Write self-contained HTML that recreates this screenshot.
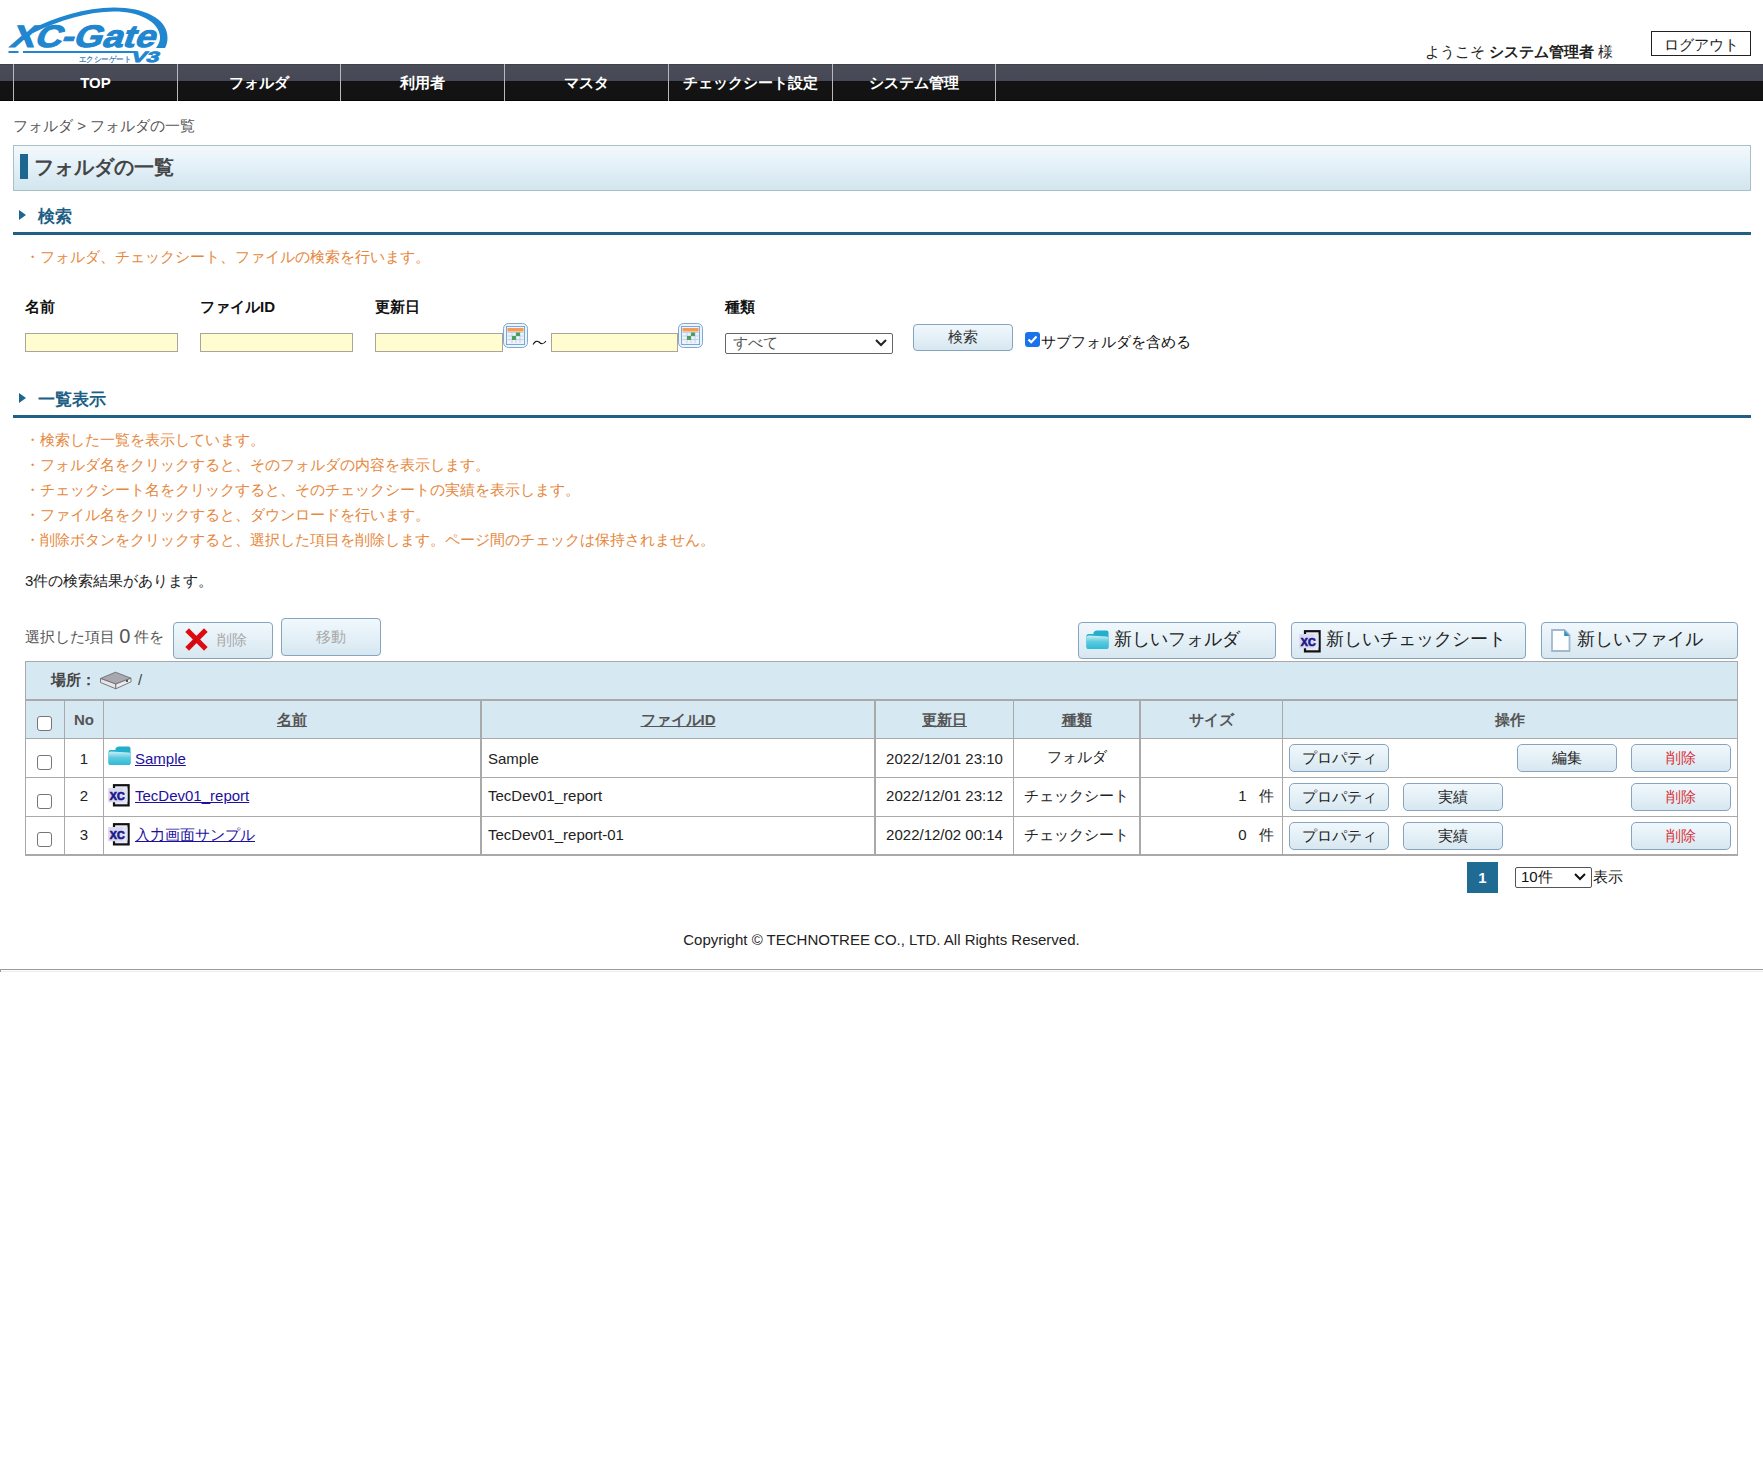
<!DOCTYPE html>
<html><head><meta charset="utf-8">
<style>
*{margin:0;padding:0;box-sizing:border-box}
html,body{width:1763px;height:1465px;background:#fff;overflow:hidden}
body{font-family:"Liberation Sans",sans-serif;font-size:15px;color:#222;position:relative}
.a{position:absolute;white-space:nowrap}
.nav{position:absolute;left:0;top:64px;width:1763px;height:37px;background:linear-gradient(#3e404a 0,#3e404a 1px,#4a4c58 1px,#464855 17px,#0e0f12 17px,#131313 18px,#131313 36px,#050505 36px)}
.nav .sep{position:absolute;top:0;width:1px;height:37px;background:#b8b8c0}
.nav .it{position:absolute;top:0;height:37px;line-height:37px;color:#fff;font-weight:bold;font-size:15px;text-align:center}
.crumb{color:#555;font-size:15px}
.titlebox{position:absolute;left:13px;top:145px;width:1738px;height:46px;border:1px solid #a9c0c8;background:linear-gradient(#f4f8fa,#e6f3fa 35%,#dcebf3 70%,#d2e6ee)}
.titlebar{position:absolute;left:20px;top:154px;width:8px;height:25px;background:#1d6690}
.title{left:34px;top:154px;font-size:20px;font-weight:bold;color:#454545;line-height:26px}
.sech{font-size:17px;font-weight:bold;color:#1d5f86}
.tri{position:absolute;width:0;height:0;border-top:5px solid transparent;border-bottom:5px solid transparent;border-left:7px solid #1d6690}
.uline{position:absolute;left:13px;width:1738px;height:3px;background:#215f84}
.note{color:#e6873c;font-size:15px}
.lbl{font-weight:bold;font-size:15px;color:#111}
.inp{position:absolute;height:19px;background:#fffdd0;border:1px solid #aaa59a}
.cal{position:absolute;width:24px;height:24px;border:1px solid #7aa6cf;border-radius:4px;background:linear-gradient(#eef5fc,#c9dcef)}
.btn{position:absolute;border:1px solid #86a3bf;border-radius:4px;background:linear-gradient(#f0f8fc,#e4f0f7 50%,#d7e7f0);text-align:center;color:#333}
.tbl{position:absolute;border-collapse:collapse}

.cb{position:absolute;width:15px;height:15px;border:1px solid #767676;border-radius:3px;background:#fff}
.th{top:701px;height:37px;line-height:37px;text-align:center;font-weight:bold;font-size:15px;color:#555}
.th u{text-decoration:underline}
.td{font-size:15px;color:#222;line-height:20px}
.lnk{color:#1d10a0;text-decoration:underline}
.sb{width:100px;height:28px;line-height:26px;font-size:15px;border-radius:5px;color:#222}
.red{color:#d92e36}
</style></head><body>

<!-- logo -->
<svg class="a" style="left:0;top:0" width="180" height="66" viewBox="0 0 180 66">
  <path d="M30 30 C 55 17, 85 7.5, 114 7.5 C 145 7.5, 168 19, 167.5 38 C 167.5 42, 166.5 45.5, 165 48 L 156 48 C 159 44, 160.5 40, 160 36 C 158.5 22, 140 11.5, 114 11.5 C 88 11.5, 60 20, 33 33 Z" fill="#2086cf"/>
  <g transform="translate(17.3,0) skewX(-20)">
  <text x="9" y="47.5" font-family="Liberation Sans" font-weight="bold" font-size="31" fill="#2086cf" stroke="#2086cf" stroke-width="1" textLength="145" lengthAdjust="spacingAndGlyphs">XC-Gate</text>
  </g>
  <rect x="8.5" y="51" width="10" height="2" fill="#2086cf"/>
  <rect x="23" y="51" width="113" height="2" fill="#2086cf"/>
  <g transform="translate(22.6,0) skewX(-20)">
  <text x="130" y="62.3" font-family="Liberation Sans" font-weight="bold" font-size="15" fill="#2086cf" stroke="#2086cf" stroke-width="0.8" textLength="28" lengthAdjust="spacingAndGlyphs">V3</text>
  </g>
  <text x="79" y="62" font-family="Liberation Sans" font-size="7.5" fill="#2f78b0" stroke="#2f78b0" stroke-width="0.2" textLength="52" lengthAdjust="spacingAndGlyphs">エクシーゲート</text>
</svg>

<div class="a" style="left:1425px;top:43px;font-size:15px;color:#222">ようこそ <b>システム管理者</b> 様</div>
<div class="a" style="left:1651px;top:31px;width:100px;height:25px;border:1px solid #222;text-align:center;line-height:25px;font-size:15px;color:#222">ログアウト</div>

<div class="nav">
  <div class="sep" style="left:13px"></div>
  <div class="it" style="left:14px;width:163px">TOP</div>
  <div class="sep" style="left:177px"></div>
  <div class="it" style="left:178px;width:162px">フォルダ</div>
  <div class="sep" style="left:340px"></div>
  <div class="it" style="left:341px;width:163px">利用者</div>
  <div class="sep" style="left:504px"></div>
  <div class="it" style="left:505px;width:163px">マスタ</div>
  <div class="sep" style="left:668px"></div>
  <div class="it" style="left:669px;width:163px">チェックシート設定</div>
  <div class="sep" style="left:832px"></div>
  <div class="it" style="left:833px;width:162px">システム管理</div>
  <div class="sep" style="left:995px"></div>
</div>

<div class="a crumb" style="left:13px;top:117px">フォルダ &gt; フォルダの一覧</div>

<div class="titlebox"></div>
<div class="titlebar"></div>
<div class="a title">フォルダの一覧</div>

<!-- search section -->
<div class="tri" style="left:19px;top:210px"></div>
<div class="a sech" style="left:38px;top:205px">検索</div>
<div class="uline" style="top:232px"></div>
<div class="a note" style="left:25px;top:248px">・フォルダ、チェックシート、ファイルの検索を行います。</div>


<!-- search form -->
<div class="a lbl" style="left:25px;top:298px">名前</div>
<div class="a lbl" style="left:200px;top:298px">ファイルID</div>
<div class="a lbl" style="left:375px;top:298px">更新日</div>
<div class="a lbl" style="left:725px;top:298px">種類</div>
<div class="inp" style="left:25px;top:333px;width:153px"></div>
<div class="inp" style="left:200px;top:333px;width:153px"></div>
<div class="inp" style="left:375px;top:333px;width:128px"></div>
<svg class="a" style="left:503px;top:323px" width="25" height="25" viewBox="0 0 25 25">
 <rect x="0.5" y="0.5" width="24" height="24" rx="5" fill="#eaf6fd" stroke="#7ea6cf"/>
 <rect x="3" y="3" width="19" height="19" fill="#86a4d0"/>
 <rect x="4" y="4" width="17" height="17" fill="#eef3fb"/>
 <rect x="4.5" y="5" width="16" height="3.5" fill="#f49b55"/>
 <g fill="#bcd3ea"><rect x="4.5" y="9" width="16" height="1"/><rect x="4.5" y="12.5" width="16" height="1"/><rect x="4.5" y="16" width="16" height="1"/><rect x="8.5" y="9" width="1" height="11"/><rect x="12.5" y="9" width="1" height="11"/><rect x="16.5" y="9" width="1" height="11"/></g>
 <rect x="13" y="9.5" width="4" height="3.5" fill="#4f9e5a"/>
 <rect x="9" y="13" width="4" height="4" fill="#4f9e5a"/>
</svg>
<svg class="a" style="left:532px;top:339px" width="15" height="7" viewBox="0 0 15 7"><path d="M1 5.5 C 3 2, 5 1.5, 7 3 C 9 5, 11 6, 14 2" fill="none" stroke="#111" stroke-width="1.1"/></svg>
<div class="inp" style="left:551px;top:333px;width:127px"></div>
<svg class="a" style="left:678px;top:323px" width="25" height="25" viewBox="0 0 25 25">
 <rect x="0.5" y="0.5" width="24" height="24" rx="5" fill="#eaf6fd" stroke="#7ea6cf"/>
 <rect x="3" y="3" width="19" height="19" fill="#86a4d0"/>
 <rect x="4" y="4" width="17" height="17" fill="#eef3fb"/>
 <rect x="4.5" y="5" width="16" height="3.5" fill="#f49b55"/>
 <g fill="#bcd3ea"><rect x="4.5" y="9" width="16" height="1"/><rect x="4.5" y="12.5" width="16" height="1"/><rect x="4.5" y="16" width="16" height="1"/><rect x="8.5" y="9" width="1" height="11"/><rect x="12.5" y="9" width="1" height="11"/><rect x="16.5" y="9" width="1" height="11"/></g>
 <rect x="13" y="9.5" width="4" height="3.5" fill="#4f9e5a"/>
 <rect x="9" y="13" width="4" height="4" fill="#4f9e5a"/>
</svg>
<div class="a" style="left:725px;top:333px;width:168px;height:21px;border:1px solid #666;border-radius:2px;background:#fff"></div>
<div class="a" style="left:733px;top:334px;font-size:15px;color:#555;line-height:18px">すべて</div>
<svg class="a" style="left:874px;top:338px" width="14" height="10" viewBox="0 0 14 10"><path d="M2 2 L7 7 L12 2" fill="none" stroke="#222" stroke-width="2"/></svg>
<div class="btn" style="left:913px;top:324px;width:100px;height:27px;line-height:23px;font-size:15px">検索</div>
<div class="a" style="left:1025px;top:332px;width:15px;height:15px;border-radius:3px;background:#1a73e8"></div>
<svg class="a" style="left:1025px;top:332px" width="15" height="15" viewBox="0 0 15 15"><path d="M3.5 7.5 L6.2 10.2 L11.5 4.5" fill="none" stroke="#fff" stroke-width="2.2"/></svg>
<div class="a" style="left:1041px;top:333px;font-size:15px;color:#111">サブフォルダを含める</div>

<!-- list section -->
<div class="tri" style="left:19px;top:393px"></div>
<div class="a sech" style="left:38px;top:388px">一覧表示</div>
<div class="uline" style="top:415px"></div>
<div class="a note" style="left:25px;top:431px">・検索した一覧を表示しています。</div>
<div class="a note" style="left:25px;top:456px">・フォルダ名をクリックすると、そのフォルダの内容を表示します。</div>
<div class="a note" style="left:25px;top:481px">・チェックシート名をクリックすると、そのチェックシートの実績を表示します。</div>
<div class="a note" style="left:25px;top:506px">・ファイル名をクリックすると、ダウンロードを行います。</div>
<div class="a note" style="left:25px;top:531px">・削除ボタンをクリックすると、選択した項目を削除します。ページ間のチェックは保持されません。</div>
<div class="a" style="left:25px;top:572px;font-size:15px;color:#222">3件の検索結果があります。</div>

<div class="a" style="left:25px;top:625px;font-size:15px;color:#555">選択した項目 <span style="font-size:20px;vertical-align:-1px">0</span> 件を</div>
<div class="btn" style="left:173px;top:622px;width:100px;height:37px"></div>
<svg class="a" style="left:185px;top:628px" width="23" height="23" viewBox="0 0 23 23"><path d="M4 4 L19 19 M19 4 L4 19" stroke="#dc0c12" stroke-width="5.2" stroke-linecap="square"/><path d="M4 19 L11.5 11.5" stroke="#b80a10" stroke-width="2" opacity="0.5"/></svg>
<div class="a" style="left:217px;top:631px;font-size:15px;color:#a8a8a8">削除</div>
<div class="btn" style="left:281px;top:618px;width:100px;height:38px;line-height:36px;font-size:15px;color:#a8a8a8">移動</div>

<div class="btn" style="left:1078px;top:622px;width:198px;height:37px"></div>
<svg class="a" style="left:1086px;top:630px" width="23" height="20" viewBox="0 0 23 20">
 <defs><linearGradient id="fg2" x1="0" y1="0" x2="0" y2="1"><stop offset="0" stop-color="#cdeff6"/><stop offset="0.45" stop-color="#5fcbe0"/><stop offset="1" stop-color="#2fb9d6"/></linearGradient></defs>
 <path d="M7.5 2.5 Q8.5 0.5 11 0.5 L20.5 0.5 Q22.5 0.5 22.5 2.5 L22.5 17 Q22.5 19 20.5 19 L2.5 19 Q0.5 19 0.5 17 L0.5 6 Q0.5 4 2.5 4 L7.5 4 Z" fill="#23aecb"/>
 <path d="M0.5 8 Q0.5 5.5 3 5.5 L20.5 6.5 Q22.5 6.5 22.5 8.5 L22.5 17 Q22.5 19 20.5 19 L2.5 19 Q0.5 19 0.5 17 Z" fill="url(#fg2)"/>
</svg>
<div class="a" style="left:1114px;top:627px;font-size:18px;color:#222">新しいフォルダ</div>
<div class="btn" style="left:1291px;top:622px;width:235px;height:37px"></div>
<svg class="a" style="left:1299px;top:630px" width="24" height="24" viewBox="0 0 24 24">
 <rect x="6" y="1.2" width="14.6" height="20.2" fill="#e8e8f6" stroke="#111" stroke-width="2.2"/>
 <rect x="0.2" y="4" width="15" height="14.3" fill="#dadaf1"/>
 <rect x="15" y="4.5" width="4.5" height="13" fill="#e3e3f4"/>
 <text x="1.8" y="15.8" font-family="Liberation Sans" font-weight="bold" font-size="11" fill="#1b1889" stroke="#1b1889" stroke-width="0.7" textLength="14.8" lengthAdjust="spacingAndGlyphs">XC</text>
</svg>
<div class="a" style="left:1326px;top:627px;font-size:18px;color:#222">新しいチェックシート</div>
<div class="btn" style="left:1541px;top:622px;width:197px;height:37px"></div>
<svg class="a" style="left:1550px;top:628px" width="22" height="25" viewBox="0 0 22 25">
 <path d="M2 2 L14.5 2 L19.5 7 L19.5 23 L2 23 Z" fill="#fdfeff" stroke="#a3b8ca" stroke-width="1.8" stroke-linejoin="miter"/>
 <path d="M14.2 2.5 L14.2 8 L19.5 8 Z" fill="#2a92c2"/>
</svg>
<div class="a" style="left:1577px;top:627px;font-size:18px;color:#222">新しいファイル</div>


<!-- location bar -->
<div class="a" style="left:25px;top:661px;width:1713px;height:40px;background:#d6e8f1;border:1px solid #a9a9a9;border-bottom:2px solid #a9a9a9"></div>
<div class="a" style="left:51px;top:671px;font-size:15px;font-weight:bold;color:#444">場所：</div>
<svg class="a" style="left:99px;top:671px" width="34" height="19" viewBox="0 0 34 19">
 <path d="M1.5 7.5 L16.5 1.2 L32 7.2 L16.8 13 Z" fill="#a8a8ae" stroke="#6c6c70" stroke-width="0.9" stroke-linejoin="round"/>
 <path d="M1.5 7.5 L16.8 13 L16.8 17.8 L1.5 11.5 Z" fill="#e6e6ea" stroke="#6c6c70" stroke-width="0.9" stroke-linejoin="round"/>
 <path d="M16.8 13 L32 7.2 L32 10.8 L16.8 17.8 Z" fill="#ececef" stroke="#6c6c70" stroke-width="0.9" stroke-linejoin="round"/>
 <rect x="27" y="9" width="2" height="2" fill="#555"/>
</svg>
<div class="a" style="left:138px;top:671px;font-size:15px;color:#444">/</div>

<!-- table -->
<div class="a" style="left:25px;top:700px;width:1713px;height:156px;border:1px solid #a9a9a9;border-bottom:2px solid #a9a9a9;border-right:1px solid #a9a9a9"></div>
<div class="a" style="left:26px;top:701px;width:1711px;height:37px;background:#d6e8f1"></div>
<!-- row lines -->
<div class="a" style="left:26px;top:738px;width:1711px;height:1px;background:#a9a9a9"></div>
<div class="a" style="left:26px;top:777px;width:1711px;height:1px;background:#a9a9a9"></div>
<div class="a" style="left:26px;top:816px;width:1711px;height:1px;background:#a9a9a9"></div>
<!-- col lines -->
<div class="a" style="left:64px;top:701px;width:1px;height:153px;background:#a9a9a9"></div>
<div class="a" style="left:103px;top:701px;width:1px;height:153px;background:#a9a9a9"></div>
<div class="a" style="left:480px;top:701px;width:2px;height:153px;background:#a9a9a9"></div>
<div class="a" style="left:874px;top:701px;width:2px;height:153px;background:#a9a9a9"></div>
<div class="a" style="left:1013px;top:701px;width:1px;height:153px;background:#a9a9a9"></div>
<div class="a" style="left:1139px;top:701px;width:2px;height:153px;background:#a9a9a9"></div>
<div class="a" style="left:1282px;top:701px;width:1px;height:153px;background:#a9a9a9"></div>

<!-- header -->
<div class="cb" style="left:37px;top:716px"></div>
<div class="a th" style="left:65px;width:38px">No</div>
<div class="a th" style="left:104px;width:376px"><u>名前</u></div>
<div class="a th" style="left:482px;width:392px"><u>ファイルID</u></div>
<div class="a th" style="left:876px;width:137px"><u>更新日</u></div>
<div class="a th" style="left:1014px;width:125px"><u>種類</u></div>
<div class="a th" style="left:1141px;width:141px">サイズ</div>
<div class="a th" style="left:1283px;width:454px">操作</div>

<!-- rows -->
<div class="cb" style="left:37px;top:755px"></div>
<div class="cb" style="left:37px;top:794px"></div>
<div class="cb" style="left:37px;top:832px"></div>
<div class="a td" style="left:65px;top:749px;width:38px;text-align:center">1</div>
<div class="a td" style="left:65px;top:786px;width:38px;text-align:center">2</div>
<div class="a td" style="left:65px;top:825px;width:38px;text-align:center">3</div>

<svg class="a" style="left:108px;top:746px" width="23" height="20" viewBox="0 0 23 20">
 <defs><linearGradient id="fg1" x1="0" y1="0" x2="0" y2="1"><stop offset="0" stop-color="#cdeff6"/><stop offset="0.45" stop-color="#5fcbe0"/><stop offset="1" stop-color="#2fb9d6"/></linearGradient></defs>
 <path d="M7.5 2.5 Q8.5 0.5 11 0.5 L20.5 0.5 Q22.5 0.5 22.5 2.5 L22.5 17 Q22.5 19 20.5 19 L2.5 19 Q0.5 19 0.5 17 L0.5 6 Q0.5 4 2.5 4 L7.5 4 Z" fill="#23aecb"/>
 <path d="M0.5 8 Q0.5 5.5 3 5.5 L20.5 6.5 Q22.5 6.5 22.5 8.5 L22.5 17 Q22.5 19 20.5 19 L2.5 19 Q0.5 19 0.5 17 Z" fill="url(#fg1)"/>
</svg>
<svg class="a xc" style="left:108px;top:784px" width="24" height="24" viewBox="0 0 24 24">
 <rect x="6" y="1.2" width="14.6" height="20.2" fill="#e8e8f6" stroke="#111" stroke-width="2.2"/>
 <rect x="0.2" y="4" width="15" height="14.3" fill="#dadaf1"/>
 <rect x="15" y="4.5" width="4.5" height="13" fill="#e3e3f4"/>
 <text x="1.8" y="15.8" font-family="Liberation Sans" font-weight="bold" font-size="11" fill="#1b1889" stroke="#1b1889" stroke-width="0.7" textLength="14.8" lengthAdjust="spacingAndGlyphs">XC</text>
</svg>
<svg class="a xc" style="left:108px;top:823px" width="24" height="24" viewBox="0 0 24 24">
 <rect x="6" y="1.2" width="14.6" height="20.2" fill="#e8e8f6" stroke="#111" stroke-width="2.2"/>
 <rect x="0.2" y="4" width="15" height="14.3" fill="#dadaf1"/>
 <rect x="15" y="4.5" width="4.5" height="13" fill="#e3e3f4"/>
 <text x="1.8" y="15.8" font-family="Liberation Sans" font-weight="bold" font-size="11" fill="#1b1889" stroke="#1b1889" stroke-width="0.7" textLength="14.8" lengthAdjust="spacingAndGlyphs">XC</text>
</svg>
<div class="a td lnk" style="left:135px;top:749px">Sample</div>
<div class="a td lnk" style="left:135px;top:786px">TecDev01_report</div>
<div class="a td lnk" style="left:135px;top:825px">入力画面サンプル</div>

<div class="a td" style="left:488px;top:749px">Sample</div>
<div class="a td" style="left:488px;top:786px">TecDev01_report</div>
<div class="a td" style="left:488px;top:825px">TecDev01_report-01</div>

<div class="a td" style="left:876px;top:749px;width:137px;text-align:center">2022/12/01 23:10</div>
<div class="a td" style="left:876px;top:786px;width:137px;text-align:center">2022/12/01 23:12</div>
<div class="a td" style="left:876px;top:825px;width:137px;text-align:center">2022/12/02 00:14</div>

<div class="a td" style="left:1014px;top:747px;width:125px;text-align:center">フォルダ</div>
<div class="a td" style="left:1014px;top:786px;width:125px;text-align:center">チェックシート</div>
<div class="a td" style="left:1014px;top:825px;width:125px;text-align:center">チェックシート</div>

<div class="a td" style="left:1141px;top:786px;width:133px;text-align:right">1&nbsp;&nbsp; 件</div>
<div class="a td" style="left:1141px;top:825px;width:133px;text-align:right">0&nbsp;&nbsp; 件</div>

<div class="btn sb" style="left:1289px;top:744px">プロパティ</div>
<div class="btn sb" style="left:1517px;top:744px">編集</div>
<div class="btn sb red" style="left:1631px;top:744px">削除</div>
<div class="btn sb" style="left:1289px;top:783px">プロパティ</div>
<div class="btn sb" style="left:1403px;top:783px">実績</div>
<div class="btn sb red" style="left:1631px;top:783px">削除</div>
<div class="btn sb" style="left:1289px;top:822px">プロパティ</div>
<div class="btn sb" style="left:1403px;top:822px">実績</div>
<div class="btn sb red" style="left:1631px;top:822px">削除</div>

<!-- pagination -->
<div class="a" style="left:1467px;top:862px;width:31px;height:31px;background:#1f6b94;color:#fff;font-weight:bold;font-size:15px;text-align:center;line-height:31px">1</div>
<div class="a" style="left:1515px;top:867px;width:77px;height:21px;border:1px solid #555;border-radius:2px;background:#fff"></div>
<div class="a" style="left:1521px;top:868px;font-size:15px;color:#111;line-height:18px">10件</div>
<svg class="a" style="left:1573px;top:872px" width="14" height="10" viewBox="0 0 14 10"><path d="M2 2 L7 7 L12 2" fill="none" stroke="#111" stroke-width="2"/></svg>
<div class="a" style="left:1593px;top:868px;font-size:15px;color:#111">表示</div>

<!-- footer -->
<div class="a" style="left:0;top:931px;width:1763px;text-align:center;font-size:15px;color:#222">Copyright © TECHNOTREE CO., LTD. All Rights Reserved.</div>
<div class="a" style="left:0;top:969px;width:1763px;height:1px;background:#9a9a9a"></div>
<div class="a" style="left:0;top:971px;width:1763px;height:1px;background:#ececec"></div>
<div class="a" style="left:0;top:969px;width:1px;height:3px;background:#9a9a9a"></div>

</body></html>
